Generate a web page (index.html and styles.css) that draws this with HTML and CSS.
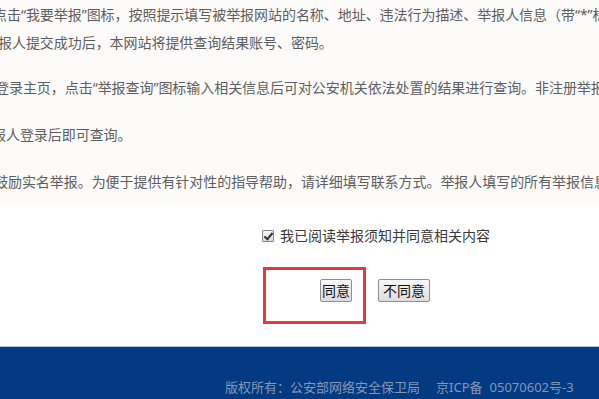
FILE: index.html
```html
<!DOCTYPE html>
<html lang="zh-CN">
<head>
<meta charset="utf-8">
<title>举报须知</title>
<link rel="stylesheet" href="styles.css">
</head>
<body>
<div class="page">
  <section class="notice">
    <div class="para">
      <div class="line l1">点击“我要举报”图标，按照提示填写被举报网站的名称、地址、违法行为描述、举报人信息（带“*”标注的为必填项）</div>
      <div class="line l2">报人提交成功后，本网站将提供查询结果账号、密码。</div>
    </div>
    <div class="para">
      <div class="line l3">登录主页，点击“举报查询”图标输入相关信息后可对公安机关依法处置的结果进行查询。非注册举报人</div>
    </div>
    <div class="para">
      <div class="line l4">报人登录后即可查询。</div>
    </div>
    <div class="para">
      <div class="line l5">鼓励实名举报。为便于提供有针对性的指导帮助，请详细填写联系方式。举报人填写的所有举报信息将</div>
    </div>
  </section>
  <section class="confirm">
    <label class="agree">
      <input type="checkbox" class="agree-box" checked>
      <span class="agree-text">我已阅读举报须知并同意相关内容</span>
    </label>
    <div class="actions">
      <button class="btn">同意</button>
      <button class="btn btn-wide">不同意</button>
      <div class="highlight"></div>
    </div>
  </section>
  <footer class="footer">
    <span class="footer-owner">版权所有：公安部网络安全保卫局</span>
    <span class="footer-icp">京ICP备</span>
    <span class="footer-num">05070602号-3</span>
  </footer>
</div>
</body>
</html>
```
FILE: styles.css
```css
html, body {
  margin: 0;
  padding: 0;
  background: #ffffff;
}
body {
  font-family: "Noto Sans", "Noto Sans CJK SC", sans-serif;
  width: 599px;
  height: 399px;
  overflow: hidden;
}
.page {
  display: flex;
  flex-direction: column;
  height: 399px;
}
.notice {
  background: #fcfbfa;
  height: 205px;
  padding-top: 1px;
  box-sizing: border-box;
  overflow: hidden;
  color: #5e5e5e;
  font-size: 14px;
}
.para {
  margin-bottom: 19px;
}
.para:first-child {
  margin-bottom: 17px;
}
.line {
  white-space: nowrap;
  line-height: 28px;
  letter-spacing: -0.05px;
}
.l1 { margin-left: -7px; }
.l2 { margin-left: -2px; }
.l3 { margin-left: -5px; }
.l4 { margin-left: -8px; }
.l5 { margin-left: -6px; }

.confirm {
  height: 141px;
  box-sizing: border-box;
  padding-top: 21px;
  padding-left: 261px;
}
.agree {
  display: flex;
  align-items: center;
  height: 20px;
  color: #3a3a3a;
  font-size: 14px;
}
.agree-box {
  appearance: none;
  -webkit-appearance: none;
  position: relative;
  width: 12px;
  height: 12px;
  margin: 0 6px 0 1px;
  border: 1px solid #8a8a8a;
  border-radius: 1px;
  background: linear-gradient(#f4f4f4, #dcdcdc);
  box-sizing: border-box;
}
.agree-box:checked::after {
  content: "";
  position: absolute;
  left: 3px;
  top: 0px;
  width: 3px;
  height: 7px;
  border-right: 2px solid #333;
  border-bottom: 2px solid #333;
  transform: rotate(40deg);
}
.agree-text {
  line-height: 20px;
}
.actions {
  position: relative;
  display: flex;
  gap: 26px;
  margin-top: 33px;
  padding-left: 59px;
}
.btn {
  height: 23px;
  padding: 0 1px;
  font-family: "Noto Sans CJK SC", sans-serif;
  font-size: 14px;
  line-height: 19px;
  color: #111;
  background: linear-gradient(#f7f7f7, #dddddd);
  border: 1px solid #8f8f8f;
  border-radius: 2px;
}
.btn-wide {
  padding: 0 4px;
}
.highlight {
  position: absolute;
  left: 2px;
  top: -12px;
  width: 97px;
  height: 51px;
  border: 3px solid #e8383d;
  pointer-events: none;
}
.footer {
  flex: 1;
  background: #033a82;
  border-top: 1px solid #a9c3e3;
  display: flex;
  align-items: center;
  padding-left: 225px;
  padding-top: 26px;
  box-sizing: border-box;
  color: #8497b7;
  font-size: 13px;
  font-family: "Noto Sans", "Noto Sans CJK SC", sans-serif;
}
.footer-icp {
  margin-left: 16px;
}
.footer-num {
  margin-left: 7px;
}
```
